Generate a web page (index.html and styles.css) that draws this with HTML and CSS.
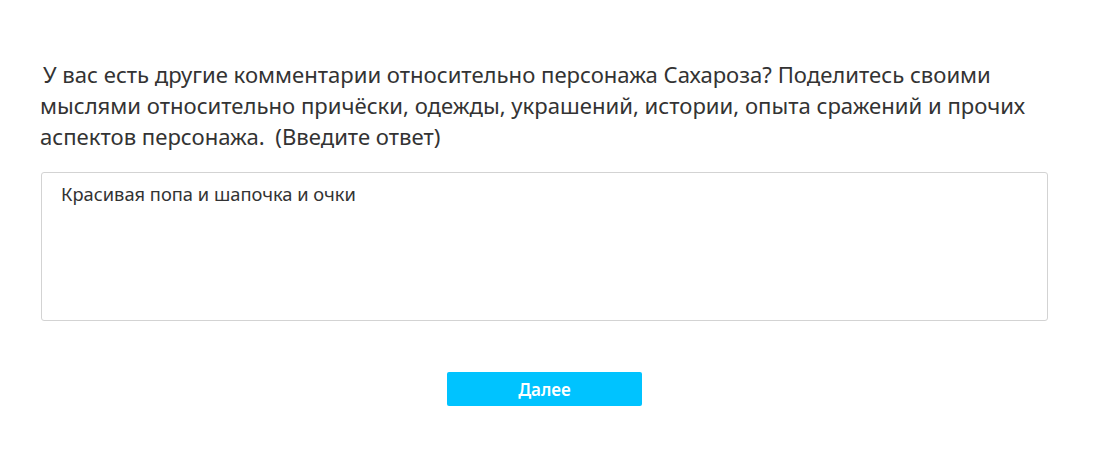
FILE: index.html
```html
<!DOCTYPE html>
<html lang="ru">
<head>
<meta charset="utf-8">
<title>Вопрос</title>
<link rel="stylesheet" href="styles.css">
</head>
<body>
<main class="survey">
  <div class="question">У вас есть другие комментарии относительно персонажа Сахароза? Поделитесь своими<br>мыслями относительно причёски, одежды, украшений, истории, опыта сражений и прочих<br>аспектов персонажа. <span class="hint">(Введите ответ)</span></div>
  <textarea class="answer" readonly>Красивая попа и шапочка и очки</textarea>
  <div class="actions"><button class="next" type="button">Далее</button></div>
</main>
</body>
</html>
```
FILE: styles.css
```css
html, body {
  margin: 0;
  padding: 0;
  background: #ffffff;
}

body {
  font-family: "Noto Sans", "Open Sans", "DejaVu Sans", sans-serif;
  color: #333333;
}

.survey {
  display: flex;
  flex-direction: column;
  width: 1007px;
  margin: 0 0 0 41px;
  padding-top: 59px;
}

.question {
  font-size: 22.1px;
  line-height: 31px;
  text-indent: 3px;
  margin-left: -1px;
}

.hint {
  margin-left: 5px;
}

.answer {
  box-sizing: border-box;
  margin-top: 20px;
  height: 149px;
  width: 100%;
  padding: 8px 19px;
  border: 1px solid #d3d3d3;
  border-radius: 3px;
  font-family: inherit;
  font-size: 18.3px;
  line-height: 26px;
  color: #333333;
  resize: none;
  outline: none;
  background: #ffffff;
}

.actions {
  display: flex;
  justify-content: center;
  margin-top: 51px;
}

.next {
  width: 195px;
  height: 34px;
  border: none;
  border-radius: 2px;
  background: #00c3ff;
  color: #ffffff;
  font-family: inherit;
  font-size: 17px;
  font-weight: 600;
  cursor: pointer;
}
```
